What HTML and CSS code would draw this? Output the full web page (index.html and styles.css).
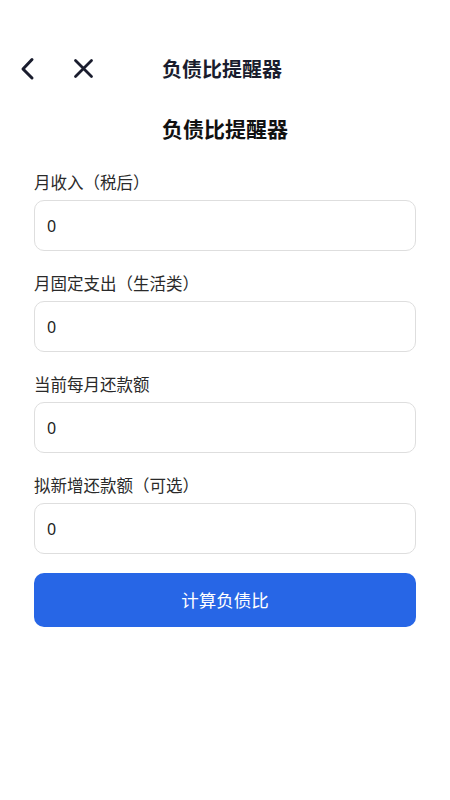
FILE: index.html
```html
<!DOCTYPE html>
<html lang="zh-CN">
<head>
<meta charset="utf-8">
<meta name="viewport" content="width=device-width, initial-scale=1">
<title>负债比提醒器</title>
<link rel="stylesheet" href="styles.css">
</head>
<body>
<div class="app">
  <header class="nav">
    <button class="icon-btn back" aria-label="返回">
      <svg width="24" height="24" viewBox="0 0 24 24"><path d="M16 2.5 L7 12 L16 21" fill="none" stroke="#1a1d2e" stroke-width="3" stroke-linecap="round" stroke-linejoin="round"/></svg>
    </button>
    <button class="icon-btn close" aria-label="关闭">
      <svg width="24" height="24" viewBox="0 0 24 24"><path d="M3.5 3.5 L19.5 19.5 M19.5 3.5 L3.5 19.5" fill="none" stroke="#1a1d2e" stroke-width="2.8" stroke-linecap="round"/></svg>
    </button>
    <div class="nav-title">负债比提醒器</div>
  </header>

  <main class="content">
    <h1 class="title">负债比提醒器</h1>
    <form class="form">
      <div class="field">
        <label class="label">月收入（税后）</label>
        <input class="input" type="text" value="0">
      </div>
      <div class="field">
        <label class="label">月固定支出（生活类）</label>
        <input class="input" type="text" value="0">
      </div>
      <div class="field">
        <label class="label">当前每月还款额</label>
        <input class="input" type="text" value="0">
      </div>
      <div class="field">
        <label class="label">拟新增还款额（可选）</label>
        <input class="input" type="text" value="0">
      </div>
      <button type="button" class="submit">计算负债比</button>
    </form>
  </main>
</div>
</body>
</html>
```

FILE: styles.css
```css
* { box-sizing: border-box; }
html, body {
  margin: 0;
  padding: 0;
  background: #ffffff;
}
body {
  font-family: "Noto Sans", "Noto Sans CJK SC", sans-serif;
  color: #222;
  text-spacing-trim: space-all;
}
.app {
  width: 450px;
  padding-top: 44px;
}
.nav {
  height: 50px;
  display: flex;
  align-items: center;
  padding-left: 16px;
}
.icon-btn {
  width: 24px;
  height: 24px;
  padding: 0;
  border: 0;
  background: none;
  display: flex;
}
.close { margin-left: 32px; }
.nav-title {
  margin-left: 66px;
  font-family: "Noto Sans CJK SC", sans-serif;
  font-size: 20px;
  font-weight: 700;
  color: #1a1d2e;
  line-height: 26px;
}
.content {
  padding: 0 34px;
}
.title {
  margin: 19px 0 0;
  text-align: center;
  font-family: "Noto Sans CJK SC", sans-serif;
  font-size: 21px;
  font-weight: 700;
  line-height: 30px;
  color: #111;
}
.form {
  margin-top: 28px;
  display: flex;
  flex-direction: column;
  gap: 21px;
}
.field {
  display: flex;
  flex-direction: column;
  gap: 7px;
}
.label {
  font-family: "Noto Sans CJK SC", sans-serif;
  font-size: 16.5px;
  line-height: 22px;
  color: #2a2a2a;
}
.input {
  height: 51px;
  width: 100%;
  border: 1.5px solid #dedede;
  border-radius: 10px;
  padding: 0 12px;
  font-family: "Noto Sans", sans-serif;
  font-size: 16px;
  color: #222;
  background: #fff;
  outline: none;
}
.submit {
  margin-top: -2px;
  height: 54px;
  width: 100%;
  border: 0;
  border-radius: 10px;
  background: #2766e6;
  color: #ffffff;
  font-family: "Noto Sans CJK SC", sans-serif;
  font-size: 17.5px;
  line-height: 24px;
}
```
